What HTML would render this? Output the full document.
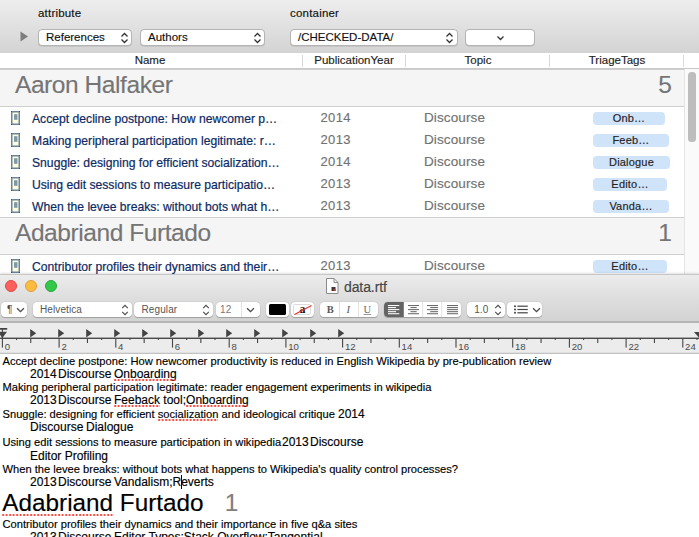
<!DOCTYPE html>
<html><head><meta charset="utf-8"><title>data.rtf</title>
<style>
*{box-sizing:border-box;margin:0;padding:0}
html,body{width:699px;height:537px;overflow:hidden;background:#fff}
body{font-family:"Liberation Sans",sans-serif;position:relative;color:#000;-webkit-text-stroke:.15px}
.abs{position:absolute}
#tb{left:0;top:0;width:699px;height:53px;background:linear-gradient(#eeeeee,#dedede 60%,#d3d3d3)}
.lbl{font-size:11.5px;line-height:14px;color:#111;letter-spacing:.2px}
.pop{height:17px;top:28.5px;background:#fff;border:1px solid #b4b4b4;border-radius:4px;font-size:11.5px;line-height:15px;padding-left:7px;color:#111;box-shadow:0 .5px .5px rgba(0,0,0,.15)}
.pop svg{position:absolute;right:2.5px;top:2px}
#hdr{left:0;top:53px;width:699px;height:16px;background:#fff;border-bottom:1px solid #c8c8c8}
.h{top:53.3px;font-size:11.5px;line-height:14px;color:#222;text-align:center}
.sep{top:55px;width:1px;height:12px;background:#d9d9d9}
.grp{left:0;width:684px;height:38px;background:#f5f5f5;border-top:1px solid #cfcfcf;border-bottom:1px solid #cfcfcf}
.gt{left:15px;font-size:24.5px;line-height:30px;color:#757575;letter-spacing:-.43px;margin-top:-.4px;white-space:nowrap}
.gc{font-size:24.5px;line-height:30px;color:#757575;text-align:right;width:40px;left:632px}
.r{left:0;width:684px;height:22px}
.r .n{left:32px;top:4.5px;font-size:12.17px;line-height:15px;color:#0c2a63;white-space:nowrap;-webkit-text-stroke:.2px}

.r .y{left:320.5px;top:3px;font-size:13px;line-height:15px;color:#727272;letter-spacing:.35px}
.r .t{left:424px;top:3px;font-size:13.5px;line-height:15px;color:#727272;letter-spacing:.12px}
.r .g{left:593px;top:5px;height:13px;background:#cfe3f9;border-radius:4px;font-size:11px;line-height:13px;letter-spacing:.2px;text-align:center;color:#222}
.r .i{left:11px;top:4px}
#sb{left:684px;top:69px;width:15px;height:206px;background:#fafafa;border-left:1px solid #e4e4e4}
#th{left:688.2px;top:72px;width:7.8px;height:70px;border-radius:3.5px;background:#bdbdbd}
/* textedit */
#tt{left:0;top:274.3px;width:699px;height:24px;background:linear-gradient(#ececec,#dedede);border-top:1px solid #c6c6c6;box-shadow:0 -1px 2px rgba(0,0,0,.12)}
#fb{left:0;top:298px;width:699px;height:24px;background:linear-gradient(#dedede,#d3d3d3);border-bottom:1px solid #b5b5b5}
.tl{top:280px;width:12px;height:12px;border-radius:6px}
.fp{top:302px;height:15px;background:#fff;border:0;border-radius:4px;font-size:10px;line-height:15px;color:#555;padding-left:7.5px;white-space:nowrap;-webkit-text-stroke:0;letter-spacing:.1px;box-shadow:0 .5px .8px rgba(0,0,0,.24),0 0 0 .5px rgba(0,0,0,.05)}
.fp svg{position:absolute}
#rul{left:0;top:322px;width:699px;height:30px;background:#fff;border-bottom:1px solid #c0c0c0}
.tx{left:2px;font-size:11px;line-height:14px;white-space:nowrap;color:#000}
.tx2{left:30px;font-size:12px;line-height:14px;white-space:nowrap;color:#000}
.sq{position:relative}
.sq::after{content:"";position:absolute;left:0;right:0;top:var(--t);height:2.4px;background:radial-gradient(circle at 1.2px 1.2px,#f8342a .8px,rgba(248,52,42,0) 1.3px) 0 0/3.5px 2.4px repeat-x}
</style></head><body>
<div id="tb" class="abs"></div>
<div class="abs lbl" style="left:38px;top:6px">attribute</div>
<div class="abs lbl" style="left:290px;top:6px">container</div>
<div class="abs pop" style="left:38px;width:94px">References<svg width="9" height="12" viewBox="0 0 9 12"><path d="M1.5 4.5 L4.5 1.5 L7.5 4.5 M1.5 7.5 L4.5 10.5 L7.5 7.5" fill="none" stroke="#333" stroke-width="1.3"/></svg></div>
<div class="abs pop" style="left:140px;width:125px">Authors<svg width="9" height="12" viewBox="0 0 9 12"><path d="M1.5 4.5 L4.5 1.5 L7.5 4.5 M1.5 7.5 L4.5 10.5 L7.5 7.5" fill="none" stroke="#333" stroke-width="1.3"/></svg></div>
<div class="abs pop" style="left:290px;width:167.5px">/CHECKED-DATA/<svg width="9" height="12" viewBox="0 0 9 12"><path d="M1.5 4.5 L4.5 1.5 L7.5 4.5 M1.5 7.5 L4.5 10.5 L7.5 7.5" fill="none" stroke="#333" stroke-width="1.3"/></svg></div>
<div class="abs pop" style="left:465px;width:70px"><svg style="right:29px;top:5px" width="9" height="6" viewBox="0 0 9 6"><path d="M1.5 1.5 L4.5 4.5 L7.5 1.5" fill="none" stroke="#333" stroke-width="1.3"/></svg></div>
<svg class="abs" style="left:20px;top:31px" width="9" height="11" viewBox="0 0 9 11"><path d="M0.5 0.5 L8 5.5 L0.5 10.5Z" fill="#7d7d7d"/></svg>
<div id="hdr" class="abs"></div>
<div class="abs h" style="left:90px;width:120px">Name</div>
<div class="abs h" style="left:294px;width:120px">PublicationYear</div>
<div class="abs h" style="left:418px;width:120px">Topic</div>
<div class="abs h" style="left:557px;width:120px">TriageTags</div>
<div class="abs sep" style="left:302px"></div>
<div class="abs sep" style="left:405px"></div>
<div class="abs sep" style="left:549px"></div>
<div class="abs sep" style="left:683px"></div>
<div class="abs grp" style="top:69px"></div><div class="abs gt" style="top:70px">Aaron Halfaker</div><div class="abs gc" style="top:70px">5</div>
<div class="abs grp" style="top:217px"></div><div class="abs gt" style="top:218px">Adabriand Furtado</div><div class="abs gc" style="top:218px">1</div>
<div class="abs r" style="top:107px"><svg class="abs i" width="9" height="14" viewBox="0 0 9 14"><rect x="0.75" y="0.75" width="7.5" height="12.5" rx="0.8" fill="#ffffdc" stroke="#6a859d" stroke-width="1.5"/><path d="M0 1 V0 H1 M8 0 H9 V1 M9 13 V14 H8 M1 14 H0 V13" fill="none" stroke="#1f3e62" stroke-width="1.2"/><rect x="3" y="3.2" width="3.5" height="5.6" fill="#8198a8"/></svg><div class="abs n">Accept decline postpone: How newcomer p…</div><div class="abs y">2014</div><div class="abs t">Discourse</div><div class="abs g" style="width:72px">Onb…</div></div>
<div class="abs r" style="top:129px"><svg class="abs i" width="9" height="14" viewBox="0 0 9 14"><rect x="0.75" y="0.75" width="7.5" height="12.5" rx="0.8" fill="#ffffdc" stroke="#6a859d" stroke-width="1.5"/><path d="M0 1 V0 H1 M8 0 H9 V1 M9 13 V14 H8 M1 14 H0 V13" fill="none" stroke="#1f3e62" stroke-width="1.2"/><rect x="3" y="3.2" width="3.5" height="5.6" fill="#8198a8"/></svg><div class="abs n">Making peripheral participation legitimate: r…</div><div class="abs y">2013</div><div class="abs t">Discourse</div><div class="abs g" style="width:76px">Feeb…</div></div>
<div class="abs r" style="top:151px"><svg class="abs i" width="9" height="14" viewBox="0 0 9 14"><rect x="0.75" y="0.75" width="7.5" height="12.5" rx="0.8" fill="#ffffdc" stroke="#6a859d" stroke-width="1.5"/><path d="M0 1 V0 H1 M8 0 H9 V1 M9 13 V14 H8 M1 14 H0 V13" fill="none" stroke="#1f3e62" stroke-width="1.2"/><rect x="3" y="3.2" width="3.5" height="5.6" fill="#8198a8"/></svg><div class="abs n">Snuggle: designing for efficient socialization…</div><div class="abs y">2014</div><div class="abs t">Discourse</div><div class="abs g" style="width:77px">Dialogue</div></div>
<div class="abs r" style="top:173px"><svg class="abs i" width="9" height="14" viewBox="0 0 9 14"><rect x="0.75" y="0.75" width="7.5" height="12.5" rx="0.8" fill="#ffffdc" stroke="#6a859d" stroke-width="1.5"/><path d="M0 1 V0 H1 M8 0 H9 V1 M9 13 V14 H8 M1 14 H0 V13" fill="none" stroke="#1f3e62" stroke-width="1.2"/><rect x="3" y="3.2" width="3.5" height="5.6" fill="#8198a8"/></svg><div class="abs n">Using edit sessions to measure participatio…</div><div class="abs y">2013</div><div class="abs t">Discourse</div><div class="abs g" style="width:74px">Edito…</div></div>
<div class="abs r" style="top:195px"><svg class="abs i" width="9" height="14" viewBox="0 0 9 14"><rect x="0.75" y="0.75" width="7.5" height="12.5" rx="0.8" fill="#ffffdc" stroke="#6a859d" stroke-width="1.5"/><path d="M0 1 V0 H1 M8 0 H9 V1 M9 13 V14 H8 M1 14 H0 V13" fill="none" stroke="#1f3e62" stroke-width="1.2"/><rect x="3" y="3.2" width="3.5" height="5.6" fill="#8198a8"/></svg><div class="abs n">When the levee breaks: without bots what h…</div><div class="abs y">2013</div><div class="abs t">Discourse</div><div class="abs g" style="width:76px">Vanda…</div></div>
<div class="abs r" style="top:255px"><svg class="abs i" width="9" height="14" viewBox="0 0 9 14"><rect x="0.75" y="0.75" width="7.5" height="12.5" rx="0.8" fill="#ffffdc" stroke="#6a859d" stroke-width="1.5"/><path d="M0 1 V0 H1 M8 0 H9 V1 M9 13 V14 H8 M1 14 H0 V13" fill="none" stroke="#1f3e62" stroke-width="1.2"/><rect x="3" y="3.2" width="3.5" height="5.6" fill="#8198a8"/></svg><div class="abs n">Contributor profiles their dynamics and their…</div><div class="abs y">2013</div><div class="abs t">Discourse</div><div class="abs g" style="width:74px">Edito…</div></div>
<div id="sb" class="abs"></div><div id="th" class="abs"></div>
<div id="tt" class="abs"></div><div id="fb" class="abs"></div>
<div class="abs tl" style="left:5px;background:#fc615d;border:.5px solid #de4a43"></div>
<div class="abs tl" style="left:25px;background:#fdbc40;border:.5px solid #dea034"></div>
<div class="abs tl" style="left:45px;background:#34c84a;border:.5px solid #27a93a"></div>
<svg class="abs" style="left:326px;top:278px" width="13" height="16" viewBox="0 0 13 16"><path d="M.5 .5 H8 L12 4.5 V15.5 H.5Z" fill="#fdfdfd" stroke="#8a8a8a"/><path d="M8 .5 V4.5 H12" fill="none" stroke="#8a8a8a"/><rect x="5.5" y="9" width="4" height="4" fill="#3a3a3a"/><rect x="7.5" y="11" width="2" height="2" fill="#c33"/></svg>
<div class="abs" style="left:344px;top:277.7px;font-size:14px;line-height:18px;color:#454545;letter-spacing:-.1px">data.rtf</div>
<div class="abs fp" style="left:1px;width:26px;padding-left:0"><span class="abs" style="left:6px;top:0;font-size:10px;color:#444">¶</span><svg style="left:14.5px;top:5px" width="9" height="6" viewBox="0 0 8.4 5.6"><path d="M1 1.2 L4.2 4.4 L7.4 1.2" fill="none" stroke="#4a4a4a" stroke-width="1.2"/></svg></div>
<div class="abs fp" style="left:33px;width:98.5px;padding-left:7px">Helvetica<svg style="right:3px;top:1.5px" width="8" height="12" viewBox="0 0 8 12"><path d="M1.2 4.2 L4 1.4 L6.8 4.2 M1.2 7.8 L4 10.6 L6.8 7.8" fill="none" stroke="#4a4a4a" stroke-width="1.1"/></svg></div>
<div class="abs fp" style="left:134px;width:79px">Regular<svg style="right:3px;top:1.5px" width="8" height="12" viewBox="0 0 8 12"><path d="M1.2 4.2 L4 1.4 L6.8 4.2 M1.2 7.8 L4 10.6 L6.8 7.8" fill="none" stroke="#4a4a4a" stroke-width="1.1"/></svg></div>
<div class="abs fp" style="left:215.5px;width:44.5px;padding-left:4.5px;color:#7a7a7a">12<span class="abs" style="left:25.5px;top:0;width:1px;height:15px;background:#e2e2e2"></span><svg style="left:30.5px;top:5px" width="9" height="6" viewBox="0 0 8.4 5.6"><path d="M1 1.2 L4.2 4.4 L7.4 1.2" fill="none" stroke="#4a4a4a" stroke-width="1.2"/></svg></div>
<div class="abs fp" style="left:266.3px;width:22.5px;padding:0"><span class="abs" style="left:2.4px;top:2.4px;width:17.7px;height:10.2px;background:#000;border-radius:1.5px"></span></div>
<div class="abs fp" style="left:291.3px;width:22.5px;padding:0"><span class="abs" style="left:2.2px;top:2.2px;width:18px;height:10.6px;border:1px solid #dcdcdc;border-radius:1.5px"></span><span class="abs" style="left:8.2px;top:-.5px;font:bold 12px/15px 'Liberation Serif',serif;color:#111">a</span><svg style="left:2.5px;top:2.5px" width="18" height="10" viewBox="0 0 18 10"><path d="M.5 9.6 L17.5 .6" stroke="#e8372c" stroke-width="1.1"/></svg></div>
<div class="abs fp" style="left:320px;width:57.5px;padding:0"><span class="abs" style="left:19px;top:0;width:1px;height:15px;background:#e2e2e2"></span><span class="abs" style="left:38.3px;top:0;width:1px;height:15px;background:#e2e2e2"></span><span class="abs" style="left:6.8px;top:0;font:bold 10.5px/15px 'Liberation Serif',serif;color:#5a5a5a">B</span><span class="abs" style="left:26.5px;top:0;font:italic 10.5px/15px 'Liberation Serif',serif;color:#5a5a5a">I</span><span class="abs" style="left:43.5px;top:0;font:10.5px/15px 'Liberation Serif',serif;color:#6a6a6a;text-decoration:underline;text-decoration-color:#999">U</span></div>
<div class="abs fp" style="left:384px;width:76.8px;padding:0"><svg style="left:0;top:0" width="77" height="15" viewBox="0 0 77 15"><path d="M4 0 H19.8 V15 H4 A4 4 0 0 1 0 11 V4 A4 4 0 0 1 4 0Z" fill="#646464"/><rect x="4" y="3.00" width="11.300000000000011" height="1.05" fill="#fff"/><rect x="4" y="5.05" width="8" height="1.05" fill="#fff"/><rect x="4" y="7.10" width="11.300000000000011" height="1.05" fill="#fff"/><rect x="4" y="9.15" width="8" height="1.05" fill="#fff"/><rect x="4" y="11.20" width="11.300000000000011" height="1.05" fill="#fff"/><rect x="24" y="3.00" width="11" height="1.05" fill="#6a6a6a"/><rect x="26.5" y="5.05" width="6.199999999999989" height="1.05" fill="#6a6a6a"/><rect x="24" y="7.10" width="11" height="1.05" fill="#6a6a6a"/><rect x="26.5" y="9.15" width="6.199999999999989" height="1.05" fill="#6a6a6a"/><rect x="24" y="11.20" width="11" height="1.05" fill="#6a6a6a"/><rect x="43" y="3.00" width="11" height="1.05" fill="#6a6a6a"/><rect x="46.19999999999999" y="5.05" width="7.800000000000011" height="1.05" fill="#6a6a6a"/><rect x="43" y="7.10" width="11" height="1.05" fill="#6a6a6a"/><rect x="46.19999999999999" y="9.15" width="7.800000000000011" height="1.05" fill="#6a6a6a"/><rect x="43" y="11.20" width="11" height="1.05" fill="#6a6a6a"/><rect x="63" y="3.00" width="11" height="1.05" fill="#6a6a6a"/><rect x="63" y="5.05" width="11" height="1.05" fill="#6a6a6a"/><rect x="63" y="7.10" width="11" height="1.05" fill="#6a6a6a"/><rect x="63" y="9.15" width="11" height="1.05" fill="#6a6a6a"/><rect x="63" y="11.20" width="11" height="1.05" fill="#6a6a6a"/><rect x="38.2" y="0" width="1" height="15" fill="#e2e2e2"/><rect x="57.2" y="0" width="1" height="15" fill="#e2e2e2"/></svg></div>
<div class="abs fp" style="left:467px;width:37.5px;padding-left:7.2px;color:#555">1.0<svg style="right:2.5px;top:1.5px" width="8" height="12" viewBox="0 0 8 12"><path d="M1.2 4.2 L4 1.4 L6.8 4.2 M1.2 7.8 L4 10.6 L6.8 7.8" fill="none" stroke="#4a4a4a" stroke-width="1.1"/></svg></div>
<div class="abs fp" style="left:506.8px;width:35.2px;padding:0"><svg style="left:7px;top:3px" width="14" height="9" viewBox="0 0 14 9"><g fill="#444"><circle cx="1" cy="1.2" r="1"/><circle cx="1" cy="4.5" r="1"/><circle cx="1" cy="7.8" r="1"/><rect x="3.4" y=".6" width="10.4" height="1.2"/><rect x="3.4" y="3.9" width="10.4" height="1.2"/><rect x="3.4" y="7.2" width="10.4" height="1.2"/></g></svg><svg style="left:25.5px;top:5px" width="9" height="6" viewBox="0 0 8.4 5.6"><path d="M1 1.2 L4.2 4.4 L7.4 1.2" fill="none" stroke="#4a4a4a" stroke-width="1.2"/></svg></div>
<svg class="abs" style="left:0;top:322px" width="699" height="32" viewBox="0 0 699 32"><rect x="0" y="0" width="699" height="31" fill="#ececec"/><rect x="0" y="0" width="699" height="1" fill="#b4b4b4"/><rect x="0" y="30.7" width="699" height="1.3" fill="#c2c2c2"/><rect x="0" y="15.6" width="699" height="1.35" fill="#454545"/><rect x="1.85" y="16" width="1.1" height="9.6" fill="#454545"/><text x="4.70" y="27.9" font-size="9.6" fill="#4a4a4a" font-family="Liberation Sans,sans-serif">0</text><rect x="16.02" y="16" width="1.1" height="2" fill="#454545"/><rect x="30.20" y="16" width="1.1" height="5" fill="#454545"/><rect x="44.38" y="16" width="1.1" height="2" fill="#454545"/><rect x="58.55" y="16" width="1.1" height="9.6" fill="#454545"/><text x="61.40" y="27.9" font-size="9.6" fill="#4a4a4a" font-family="Liberation Sans,sans-serif">2</text><rect x="72.73" y="16" width="1.1" height="2" fill="#454545"/><rect x="86.90" y="16" width="1.1" height="5" fill="#454545"/><rect x="101.08" y="16" width="1.1" height="2" fill="#454545"/><rect x="115.25" y="16" width="1.1" height="9.6" fill="#454545"/><text x="118.10" y="27.9" font-size="9.6" fill="#4a4a4a" font-family="Liberation Sans,sans-serif">4</text><rect x="129.42" y="16" width="1.1" height="2" fill="#454545"/><rect x="143.60" y="16" width="1.1" height="5" fill="#454545"/><rect x="157.78" y="16" width="1.1" height="2" fill="#454545"/><rect x="171.95" y="16" width="1.1" height="9.6" fill="#454545"/><text x="174.80" y="27.9" font-size="9.6" fill="#4a4a4a" font-family="Liberation Sans,sans-serif">6</text><rect x="186.12" y="16" width="1.1" height="2" fill="#454545"/><rect x="200.30" y="16" width="1.1" height="5" fill="#454545"/><rect x="214.47" y="16" width="1.1" height="2" fill="#454545"/><rect x="228.65" y="16" width="1.1" height="9.6" fill="#454545"/><text x="231.50" y="27.9" font-size="9.6" fill="#4a4a4a" font-family="Liberation Sans,sans-serif">8</text><rect x="242.83" y="16" width="1.1" height="2" fill="#454545"/><rect x="257.00" y="16" width="1.1" height="5" fill="#454545"/><rect x="271.17" y="16" width="1.1" height="2" fill="#454545"/><rect x="285.35" y="16" width="1.1" height="9.6" fill="#454545"/><text x="288.20" y="27.9" font-size="9.6" fill="#4a4a4a" font-family="Liberation Sans,sans-serif">10</text><rect x="299.52" y="16" width="1.1" height="2" fill="#454545"/><rect x="313.70" y="16" width="1.1" height="5" fill="#454545"/><rect x="327.88" y="16" width="1.1" height="2" fill="#454545"/><rect x="342.05" y="16" width="1.1" height="9.6" fill="#454545"/><text x="344.90" y="27.9" font-size="9.6" fill="#4a4a4a" font-family="Liberation Sans,sans-serif">12</text><rect x="356.22" y="16" width="1.1" height="2" fill="#454545"/><rect x="370.40" y="16" width="1.1" height="5" fill="#454545"/><rect x="384.57" y="16" width="1.1" height="2" fill="#454545"/><rect x="398.75" y="16" width="1.1" height="9.6" fill="#454545"/><text x="401.60" y="27.9" font-size="9.6" fill="#4a4a4a" font-family="Liberation Sans,sans-serif">14</text><rect x="412.93" y="16" width="1.1" height="2" fill="#454545"/><rect x="427.10" y="16" width="1.1" height="5" fill="#454545"/><rect x="441.27" y="16" width="1.1" height="2" fill="#454545"/><rect x="455.45" y="16" width="1.1" height="9.6" fill="#454545"/><text x="458.30" y="27.9" font-size="9.6" fill="#4a4a4a" font-family="Liberation Sans,sans-serif">16</text><rect x="469.62" y="16" width="1.1" height="2" fill="#454545"/><rect x="483.80" y="16" width="1.1" height="5" fill="#454545"/><rect x="497.97" y="16" width="1.1" height="2" fill="#454545"/><rect x="512.15" y="16" width="1.1" height="9.6" fill="#454545"/><text x="515.00" y="27.9" font-size="9.6" fill="#4a4a4a" font-family="Liberation Sans,sans-serif">18</text><rect x="526.33" y="16" width="1.1" height="2" fill="#454545"/><rect x="540.50" y="16" width="1.1" height="5" fill="#454545"/><rect x="554.68" y="16" width="1.1" height="2" fill="#454545"/><rect x="568.85" y="16" width="1.1" height="9.6" fill="#454545"/><text x="571.70" y="27.9" font-size="9.6" fill="#4a4a4a" font-family="Liberation Sans,sans-serif">20</text><rect x="583.03" y="16" width="1.1" height="2" fill="#454545"/><rect x="597.20" y="16" width="1.1" height="5" fill="#454545"/><rect x="611.38" y="16" width="1.1" height="2" fill="#454545"/><rect x="625.55" y="16" width="1.1" height="9.6" fill="#454545"/><text x="628.40" y="27.9" font-size="9.6" fill="#4a4a4a" font-family="Liberation Sans,sans-serif">22</text><rect x="639.73" y="16" width="1.1" height="2" fill="#454545"/><rect x="653.90" y="16" width="1.1" height="5" fill="#454545"/><rect x="668.08" y="16" width="1.1" height="2" fill="#454545"/><rect x="682.25" y="16" width="1.1" height="9.6" fill="#454545"/><text x="685.10" y="27.9" font-size="9.6" fill="#4a4a4a" font-family="Liberation Sans,sans-serif">24</text><rect x="696.43" y="16" width="1.1" height="2" fill="#454545"/><path d="M30.2 7.1 L36.2 11.3 L30.2 15.6Z" fill="#444"/><path d="M58.2 7.1 L64.2 11.3 L58.2 15.6Z" fill="#444"/><path d="M86.2 7.1 L92.2 11.3 L86.2 15.6Z" fill="#444"/><path d="M114.2 7.1 L120.2 11.3 L114.2 15.6Z" fill="#444"/><path d="M142.2 7.1 L148.2 11.3 L142.2 15.6Z" fill="#444"/><path d="M170.2 7.1 L176.2 11.3 L170.2 15.6Z" fill="#444"/><path d="M198.2 7.1 L204.2 11.3 L198.2 15.6Z" fill="#444"/><path d="M226.2 7.1 L232.2 11.3 L226.2 15.6Z" fill="#444"/><path d="M254.2 7.1 L260.2 11.3 L254.2 15.6Z" fill="#444"/><path d="M282.2 7.1 L288.2 11.3 L282.2 15.6Z" fill="#444"/><path d="M310.2 7.1 L316.2 11.3 L310.2 15.6Z" fill="#444"/><path d="M338.2 7.1 L344.2 11.3 L338.2 15.6Z" fill="#444"/><path d="M0 6 H7.2 V7.75 H0Z M0 9.8 H7 L2.4 16 L0 12.8Z" fill="#444"/><rect x="1.85" y="7" width="1.1" height="10" fill="#444"/><path d="M694 10 H699 V15.8 Z" fill="#444"/></svg>
<div class="abs" style="left:2.5px;top:354.14px;font-size:11.15px;line-height:14px;white-space:nowrap;color:#000"><span style="letter-spacing:.013px">Accept decline postpone: How newcomer productivity is reduced in English Wikipedia by pre-publication review</span></div>
<div class="abs" style="left:30px;top:366.54px;font-size:12px;line-height:14px;white-space:nowrap;color:#000">2014</div>
<div class="abs" style="left:58px;top:366.54px;font-size:12px;line-height:14px;white-space:nowrap;color:#000">Discourse</div>
<div class="abs" style="left:114px;top:366.54px;font-size:12px;line-height:14px;white-space:nowrap;color:#000"><span class="sq" style="--t:12px">Onboarding</span></div>
<div class="abs" style="left:2.5px;top:380.14px;font-size:11.15px;line-height:14px;white-space:nowrap;color:#000"><span style="letter-spacing:-.018px">Making peripheral participation legitimate: reader engagement experiments in wikipedia</span></div>
<div class="abs" style="left:30px;top:393.14px;font-size:12px;line-height:14px;white-space:nowrap;color:#000">2013</div>
<div class="abs" style="left:58px;top:393.14px;font-size:12px;line-height:14px;white-space:nowrap;color:#000">Discourse</div>
<div class="abs" style="left:114px;top:393.14px;font-size:12px;line-height:14px;white-space:nowrap;color:#000"><span class="sq" style="--t:12px">Feeback</span> tool;<span class="sq" style="--t:12px">Onboarding</span></div>
<div class="abs" style="left:2.5px;top:407.14px;font-size:11.15px;line-height:14px;white-space:nowrap;color:#000">Snuggle: designing for efficient <span class="sq" style="--t:10.8px">socialization</span> and ideological critique</div>
<div class="abs" style="left:338px;top:406.84px;font-size:12px;line-height:14px;white-space:nowrap;color:#000">2014</div>
<div class="abs" style="left:30px;top:420.24px;font-size:12px;line-height:14px;white-space:nowrap;color:#000">Discourse</div>
<div class="abs" style="left:86px;top:420.24px;font-size:12px;line-height:14px;white-space:nowrap;color:#000">Dialogue</div>
<div class="abs" style="left:2.5px;top:434.84px;font-size:11.15px;line-height:14px;white-space:nowrap;color:#000">Using edit sessions to measure participation in wikipedia</div>
<div class="abs" style="left:282px;top:434.54px;font-size:12px;line-height:14px;white-space:nowrap;color:#000">2013</div>
<div class="abs" style="left:310px;top:434.54px;font-size:12px;line-height:14px;white-space:nowrap;color:#000">Discourse</div>
<div class="abs" style="left:30px;top:448.64px;font-size:12px;line-height:14px;white-space:nowrap;color:#000">Editor Profiling</div>
<div class="abs" style="left:2.5px;top:461.64px;font-size:11.15px;line-height:14px;white-space:nowrap;color:#000">When the levee breaks: without bots what happens to Wikipedia's quality control processes?</div>
<div class="abs" style="left:30px;top:474.74px;font-size:12px;line-height:14px;white-space:nowrap;color:#000">2013</div>
<div class="abs" style="left:58px;top:474.74px;font-size:12px;line-height:14px;white-space:nowrap;color:#000">Discourse</div>
<div class="abs" style="left:114px;top:474.74px;font-size:12px;line-height:14px;white-space:nowrap;color:#000">Vandalism;Reverts</div>
<div class="abs" style="left:2.3px;top:488.18px;font-size:24.3px;line-height:30px;white-space:nowrap;color:#000"><span class="sq" style="--t:25.2px">Adabriand</span> Furtado</div>
<div class="abs" style="left:224.8px;top:488.18px;font-size:24.3px;line-height:30px;white-space:nowrap;color:#808080">1</div>
<div class="abs" style="left:2.5px;top:516.94px;font-size:11.15px;line-height:14px;white-space:nowrap;color:#000">Contributor profiles their dynamics and their importance in five q&amp;a sites</div>
<div class="abs" style="left:30px;top:530.04px;font-size:12px;line-height:14px;white-space:nowrap;color:#000">2013</div>
<div class="abs" style="left:58px;top:530.04px;font-size:12px;line-height:14px;white-space:nowrap;color:#000">Discourse</div>
<div class="abs" style="left:114px;top:530.04px;font-size:12px;line-height:14px;white-space:nowrap;color:#000">Editor Types;Stack Overflow;Tangential</div>
<div class="abs" style="left:181px;top:475px;width:1.2px;height:14px;background:#000"></div>
</body></html>
